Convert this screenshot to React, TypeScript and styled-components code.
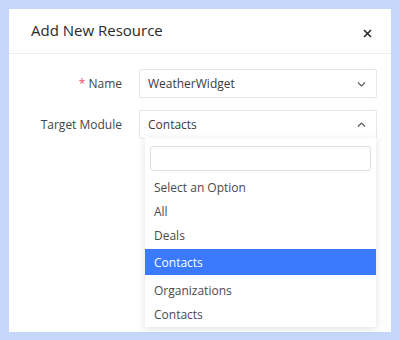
import styled, { createGlobalStyle } from "styled-components";

const GlobalStyle = createGlobalStyle`
    html, body {
        margin: 0;
        padding: 0;
        background: #c6d7fc;
    }
    * {
        box-sizing: border-box;
    }
`;

const Page = styled.div`
    width: 400px;
    height: 340px;
    padding: 9px 9px 8px 9px;
    background: #c6d7fc;
    font-family: "Open Sans", "Liberation Sans", sans-serif;
`;

const Card = styled.div`
    background: #ffffff;
    height: 323px;
    display: flex;
    flex-direction: column;
`;

const Header = styled.div`
    height: 45px;
    display: flex;
    align-items: center;
    justify-content: space-between;
    padding: 0 17px 0 22px;
    border-bottom: 1px solid #ececec;
`;

const Title = styled.h2`
    margin: 0;
    font-size: 15px;
    font-weight: 500;
    color: #2a2a2a;
    padding-bottom: 2px;
`;

const CloseButton = styled.button`
    border: none;
    background: none;
    padding: 0;
    width: 14px;
    height: 14px;
    display: flex;
    align-items: center;
    justify-content: center;
    margin-top: 4px;
    cursor: pointer;
`;

const Body = styled.div`
    padding: 15px 14px 0 0;
    display: flex;
    flex-direction: column;
    gap: 12px;
`;

const FormRow = styled.div`
    display: grid;
    grid-template-columns: 113px 1fr;
    column-gap: 17px;
    align-items: center;
`;

const Label = styled.label`
    text-align: right;
    font-size: 12px;
    color: #444;
`;

const Required = styled.span`
    color: #f0506e;
    margin-right: 3px;
`;

const SelectWrap = styled.div`
    position: relative;
`;

const SelectBox = styled.div`
    height: 29px;
    border: 1px solid #e6e6e6;
    border-radius: 2px;
    display: flex;
    align-items: center;
    justify-content: space-between;
    padding: 0 10px 0 8px;
    font-size: 12px;
    color: #3a3a3a;
`;

const Dropdown = styled.div`
    position: absolute;
    top: calc(100% - 1px);
    left: 6px;
    right: 1px;
    background: #fff;
    box-shadow: 0 2px 8px rgba(0, 0, 0, 0.12);
    padding: 8px 0 1px 0;
    z-index: 2;
`;

const SearchInput = styled.input`
    display: block;
    width: calc(100% - 10px);
    margin: 0 5px 4px 5px;
    height: 25px;
    border: 1px solid #e0e0e0;
    border-radius: 3px;
    outline: none;
`;

const Option = styled.div<{ active?: boolean }>`
    height: ${(p) => (p.active ? "26px" : "24px")};
    margin: ${(p) => (p.active ? "2px 0 3px 0" : "0")};
    display: flex;
    align-items: center;
    padding-left: 9px;
    font-size: 12px;
    color: ${(p) => (p.active ? "#ffffff" : "#4a4a4a")};
    background: ${(p) => (p.active ? "#3b79ff" : "transparent")};
`;

const Chevron = ({ up }: { up?: boolean }) => (
    <svg width="9" height="6" viewBox="0 0 9 6">
        <path
            d={up ? "M1 4.5 L4.5 1 L8 4.5" : "M1 1.5 L4.5 5 L8 1.5"}
            fill="none"
            stroke="#555"
            strokeWidth="1.1"
        />
    </svg>
);

const options = ["Select an Option", "All", "Deals", "Contacts", "Organizations", "Contacts"];

export default function App() {
    return (
        <Page>
            <GlobalStyle />
            <Card>
                <Header>
                    <Title>Add New Resource</Title>
                    <CloseButton>
                        <svg width="9" height="9" viewBox="0 0 9 9">
                            <path d="M1 1 L8 8 M8 1 L1 8" stroke="#222" strokeWidth="1.5" />
                        </svg>
                    </CloseButton>
                </Header>
                <Body>
                    <FormRow>
                        <Label>
                            <Required>*</Required>Name
                        </Label>
                        <SelectBox>
                            WeatherWidget
                            <Chevron />
                        </SelectBox>
                    </FormRow>
                    <FormRow>
                        <Label>Target Module</Label>
                        <SelectWrap>
                            <SelectBox>
                                Contacts
                                <Chevron up />
                            </SelectBox>
                            <Dropdown>
                                <SearchInput />
                                {options.map((opt, i) => (
                                    <Option key={i} active={i === 3}>
                                        {opt}
                                    </Option>
                                ))}
                            </Dropdown>
                        </SelectWrap>
                    </FormRow>
                </Body>
            </Card>
        </Page>
    );
}
